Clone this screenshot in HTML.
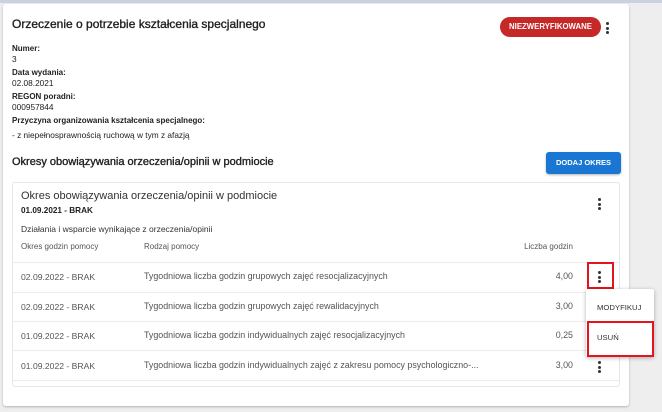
<!DOCTYPE html>
<html><head><meta charset="utf-8"><style>
*{box-sizing:border-box;margin:0;padding:0}
body{width:662px;height:412px;background:#eeeeee;font-family:"Liberation Sans",sans-serif;color:#212121;position:relative;overflow:hidden}
.a{position:absolute;white-space:nowrap}
.top{position:absolute;left:0;top:0;width:662px;height:3px;background:#c9d1e2}
.card{position:absolute;left:3px;top:4px;width:626px;height:402px;background:#fff;border-radius:3px;box-shadow:0 1px 2px rgba(0,0,0,.25)}
.inner{position:absolute;left:12px;top:182px;width:608px;height:205px;background:#fff;border:1px solid #e6e6e6;border-radius:3px}
.b{font-weight:bold;font-size:8px}
.s{font-size:8.3px}
.dots{position:absolute;width:3px}
.dots i{display:block;width:3px;height:3px;border-radius:50%;background:#333;margin-bottom:1.5px}
.line{position:absolute;left:13px;width:606px;height:1px;background:#ececec}
.td{font-size:8.9px;color:#555}
.d{font-size:8.6px;color:#555}
.m{-webkit-text-stroke:0.35px #212121}
</style></head><body>
<div class="top"></div>
<div class="card"></div>
<div class="a m" style="left:12px;top:17px;font-size:12px;color:#212121">Orzeczenie o potrzebie kształcenia specjalnego</div>
<div class="a" style="left:500px;top:17px;width:101px;height:20px;border-radius:10px;background:#c62828;color:#fff;font-size:7.8px;font-weight:bold;line-height:20px;text-align:center">NIEZWERYFIKOWANE</div>
<div class="dots" style="left:606px;top:22px"><i></i><i></i><i></i></div>
<div class="a b" style="left:12px;top:44px">Numer:</div>
<div class="a s" style="left:12px;top:54px">3</div>
<div class="a b" style="left:12px;top:68px">Data wydania:</div>
<div class="a s" style="left:12px;top:78px">02.08.2021</div>
<div class="a b" style="left:12px;top:92px">REGON poradni:</div>
<div class="a s" style="left:12px;top:102px">000957844</div>
<div class="a b" style="left:12px;top:116px">Przyczyna organizowania kształcenia specjalnego:</div>
<div class="a s" style="left:12px;top:130px">- z niepełnosprawnością ruchową w tym z afazją</div>
<div class="a m" style="left:12px;top:156px;font-size:11px">Okresy obowiązywania orzeczenia/opinii w podmiocie</div>
<div class="a" style="left:546px;top:152px;width:75px;height:22px;background:#1976d2;color:#fff;border-radius:3px;font-size:7.5px;font-weight:bold;line-height:22px;text-align:center;box-shadow:0 1px 2px rgba(0,0,0,.3)">DODAJ OKRES</div>
<div class="inner"></div>
<div class="a" style="left:21px;top:190px;font-size:11px;color:#333">Okres obowiązywania orzeczenia/opinii w podmiocie</div>
<div class="a b" style="left:21px;top:206px;font-size:8.2px">01.09.2021 - BRAK</div>
<div class="dots" style="left:598px;top:198px"><i></i><i></i><i></i></div>
<div class="a" style="left:21px;top:224px;color:#333;font-size:8.5px">Działania i wsparcie wynikające z orzeczenia/opinii</div>
<div class="a" style="left:21px;top:242px;font-size:8px;color:#555">Okres godzin pomocy</div>
<div class="a" style="left:144px;top:242px;font-size:8px;color:#555">Rodzaj pomocy</div>
<div class="a" style="left:503px;top:242px;width:70px;text-align:right;font-size:8px;color:#555">Liczba godzin</div>
<div class="line" style="top:262px"></div>
<div class="line" style="top:292px"></div>
<div class="line" style="top:321px"></div>
<div class="line" style="top:350px"></div>
<div class="line" style="top:380px"></div>
<div class="a d" style="left:21px;top:272px">02.09.2022 - BRAK</div>
<div class="a td" style="left:144px;top:271px">Tygodniowa liczba godzin grupowych zajęć resocjalizacyjnych</div>
<div class="a td" style="left:513px;top:271px;width:60px;text-align:right">4,00</div>
<div class="a d" style="left:21px;top:302px">02.09.2022 - BRAK</div>
<div class="a td" style="left:144px;top:301px">Tygodniowa liczba godzin grupowych zajęć rewalidacyjnych</div>
<div class="a td" style="left:513px;top:301px;width:60px;text-align:right">3,00</div>
<div class="a d" style="left:21px;top:331px">01.09.2022 - BRAK</div>
<div class="a td" style="left:144px;top:330px">Tygodniowa liczba godzin indywidualnych zajęć resocjalizacyjnych</div>
<div class="a td" style="left:513px;top:330px;width:60px;text-align:right">0,25</div>
<div class="a d" style="left:21px;top:361px">01.09.2022 - BRAK</div>
<div class="a td" style="left:144px;top:360px">Tygodniowa liczba godzin indywidualnych zajęć z zakresu pomocy psychologiczno-...</div>
<div class="a td" style="left:513px;top:360px;width:60px;text-align:right">3,00</div>
<div class="dots" style="left:598px;top:271px"><i></i><i></i><i></i></div>
<div class="dots" style="left:598px;top:361px"><i></i><i></i><i></i></div>
<div class="a" style="left:587px;top:262px;width:27px;height:27px;border:2.5px solid #e3141e"></div>
<div class="a" style="left:586px;top:289px;width:68px;height:68px;background:#fff;box-shadow:0 1px 4px rgba(0,0,0,.3);border-radius:2px"></div>
<div class="a" style="left:597px;top:303px;font-size:7.7px;color:#333">MODYFIKUJ</div>
<div class="a" style="left:587px;top:321px;width:67px;height:36px;border:2.5px solid #e3141e"></div>
<div class="a" style="left:597px;top:333px;font-size:7.7px;color:#333">USUŃ</div>
</body></html>
